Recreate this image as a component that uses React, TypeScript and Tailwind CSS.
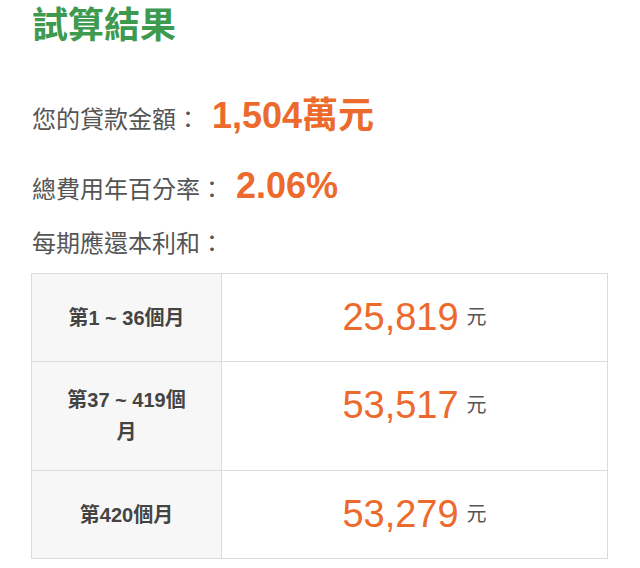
const rows = [
  { label: '第1 ~ 36個月', amount: '25,819' },
  { label: '第37 ~ 419個月', amount: '53,517' },
  { label: '第420個月', amount: '53,279' },
]

export default function App() {
  return (
    <div
      className="w-[640px] h-[568px] bg-white pl-[32px] pr-[32px] overflow-hidden"
      style={{ fontFamily: '"Liberation Sans", "Noto Sans CJK TC", sans-serif' }}
    >
      <h1 className="mt-1 text-[36px] leading-[44px] font-bold text-[#3e9a4f]">試算結果</h1>

      <div className="mt-[46px] flex items-baseline h-[44px] leading-[44px]">
        <span className="text-[24px] text-[#555]">您的貸款金額：</span>
        <span className="ml-3 text-[36px] font-bold text-[#ec6a2c]">1,504萬元</span>
      </div>

      <div className="mt-[26px] flex items-baseline h-[44px] leading-[44px]">
        <span className="text-[24px] text-[#555]">總費用年百分率：</span>
        <span className="ml-3 text-[36px] font-bold text-[#ec6a2c]">2.06%</span>
      </div>

      <p className="mt-[20px] text-[24px] leading-[32px] text-[#555]">每期應還本利和：</p>

      <table className="mt-[13px] w-[577px] -ml-px border-collapse">
        <tbody>
          {rows.map((r) => (
            <tr key={r.label}>
              <td className="w-[190px] border border-[#dcdcdc] bg-[#f7f7f7] px-[28px] py-[22px] text-center text-[20px] leading-[32px] font-bold text-[#444]">
                {r.label}
              </td>
              <td className="align-top border border-[#dcdcdc] py-[22px]">
                <div className="flex items-center justify-center gap-2">
                  <span className="text-[38px] leading-[43px] text-[#ec6a2c]">{r.amount}</span>
                  <span className="text-[20px] leading-[43px] text-[#555]">元</span>
                </div>
              </td>
            </tr>
          ))}
        </tbody>
      </table>
    </div>
  )
}
